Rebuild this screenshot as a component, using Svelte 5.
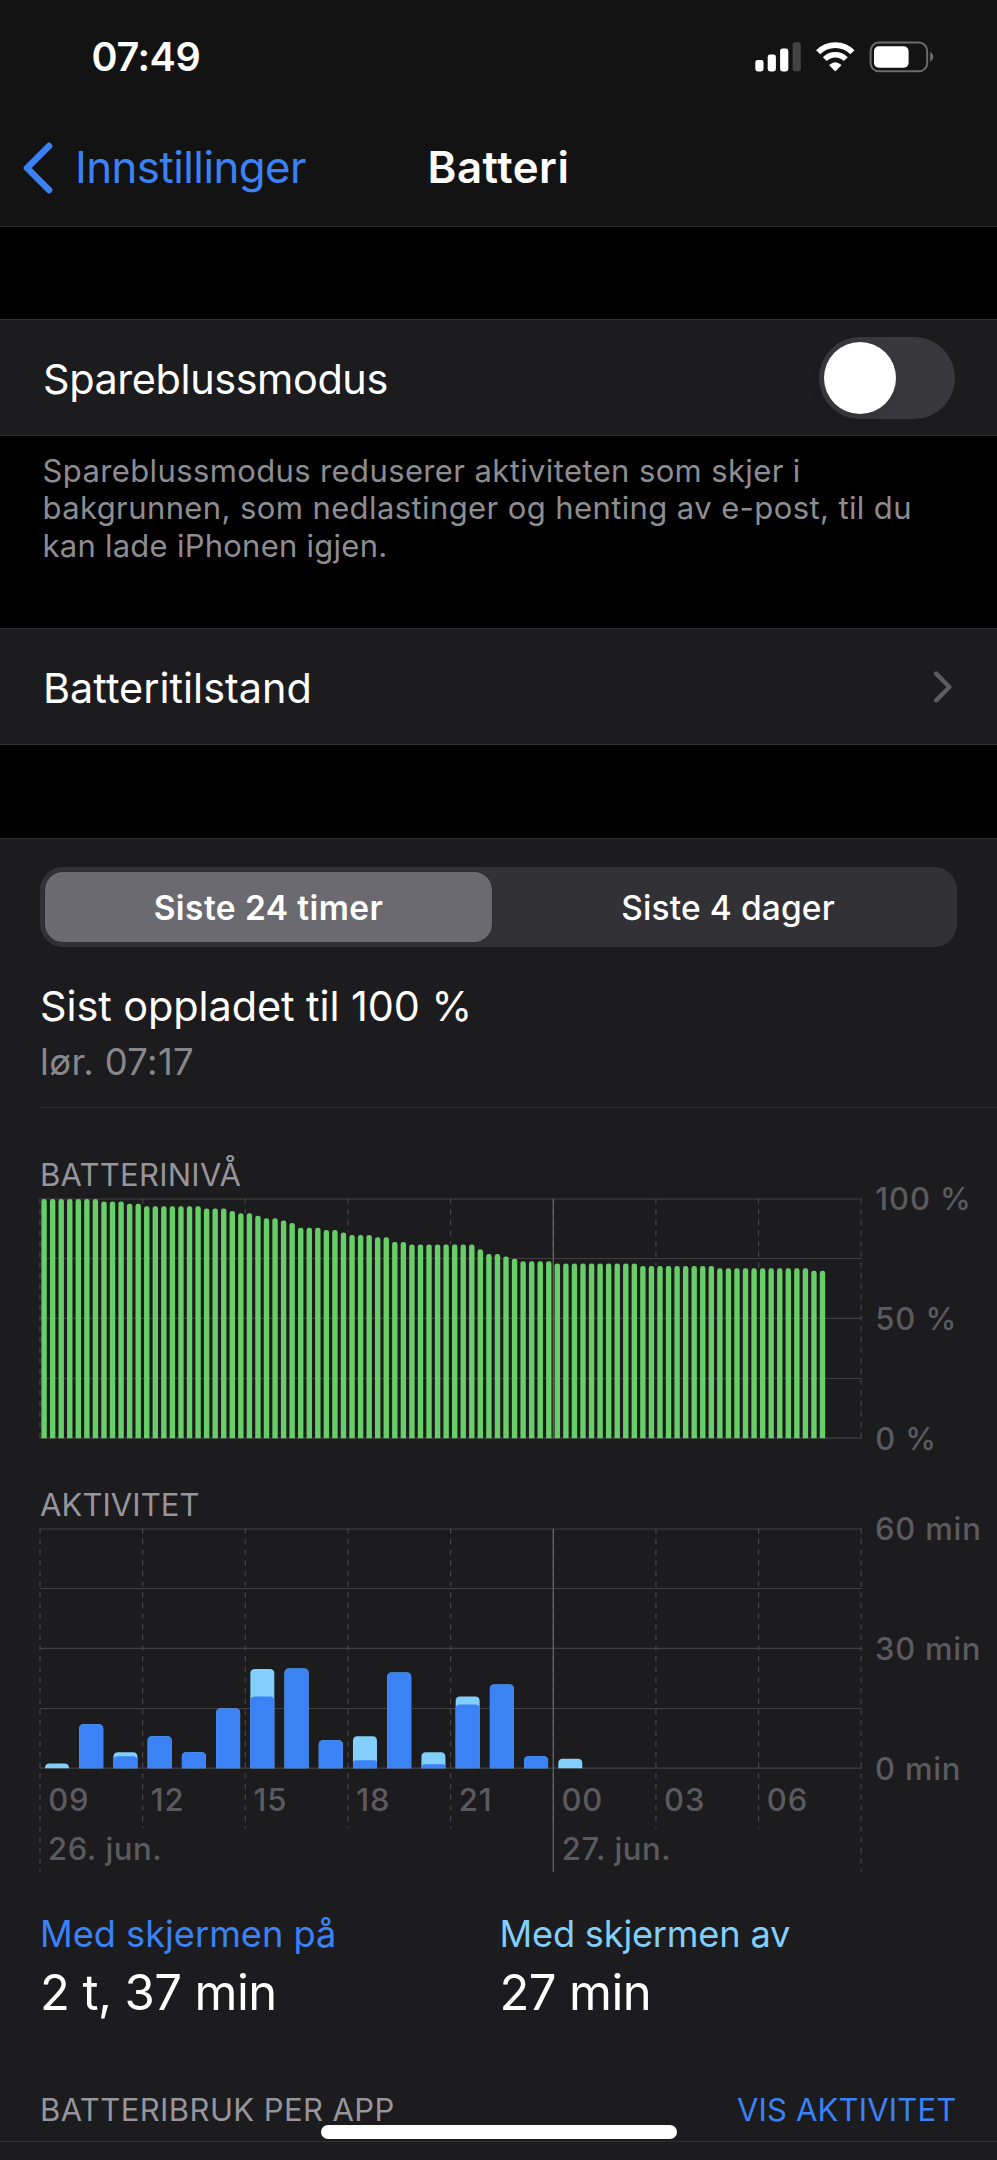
<script>
  // Battery level as [percent, number of consecutive quarter hours]
  const runs = [
    [100, 7], [99, 3], [98, 2], [97, 7], [96, 3], [95, 1], [94, 2], [93, 1],
    [92, 2], [91, 1], [90, 1], [88, 3], [87, 2], [86, 1], [85, 3], [84, 2],
    [82, 2], [81, 8], [79, 1], [77, 2], [76, 1], [75, 1], [74, 4], [73, 10],
    [72, 9], [71, 11], [70, 2]
  ];
  const levels = runs.flatMap(([v, n]) => Array(n).fill(v));

  // Minutes per hour: total, and the part with the screen on
  const activity = [
    [1.2, 0], [11, 11], [4, 3], [8, 8], [4, 4], [15, 15], [24.9, 18], [25, 25],
    [7, 7], [8, 2], [24, 24], [4, 1], [18, 16], [21, 21], [3, 3], [2.4, 0]
  ];

  const left = 40;
  const section = 102.65;
  const right = left + section * 8;
  const top = 4;
  const base = 243.2;
  const span = base - top;
  const lines = [4, 63.5, 123.3, 183.5, 243.1];
  const verticals = Array.from({ length: 9 }, (_, i) => left + i * section);
  const hours = ['09', '12', '15', '18', '21', '00', '03', '06'];

  const levelTop = (v) => base - (span * v) / 100;
  const dashEnd = (i) => (i === 0 || i === 8 ? base : levelTop(levels[i * 12 - 1]));
  const barPath = (x, w, h, r) => {
    const k = Math.min(r, h);
    const y = base - h;
    return `M${x} ${base}V${y + k}q0 ${-k} ${r} ${-k}h${w - 2 * r}q${r} 0 ${r} ${k}V${base}Z`;
  };
  const minutes = (m) => (m * span) / 60;

  let saver = false;
</script>

<div class="screen">
  <header>
    <div class="status">
      <span class="time">07:49</span>
      <svg class="indicators" width="180" height="32" viewBox="754 40.5 180 32">
        <g fill="#fff">
          <rect x="755.3" y="59.5" width="8.2" height="11.5" rx="2.4" />
          <rect x="767.7" y="54" width="8.2" height="17" rx="2.4" />
          <rect x="780.1" y="48" width="8.2" height="23" rx="2.4" />
          <rect x="792.6" y="41.8" width="8.2" height="29.2" rx="2.4" fill="#434344" />
        </g>
        <g fill="none" stroke="#fff">
          <path d="M818.2 51.7A24 24 0 0 1 852.4 51.7" stroke-width="5.8" />
          <path d="M824.8 58.7A14.6 14.6 0 0 1 845.8 58.7" stroke-width="5.5" />
        </g>
        <path d="M835.3 70.2L829.9 64.7Q835.3 60 840.7 64.7Z" fill="#fff" stroke="#fff" stroke-width="1.2" stroke-linejoin="round" />
        <rect x="870.6" y="42" width="56.6" height="28.8" rx="8.4" fill="none" stroke="#6c6c6c" stroke-width="1.9" />
        <rect x="874" y="45.8" width="34.6" height="21.4" rx="4.8" fill="#fff" />
        <path d="M930.2 51.6Q933.2 53 933.2 56.3T930.2 61Z" fill="#6c6c6c" />
      </svg>
    </div>
    <nav>
      <a href="#top" class="back">
        <svg width="30" height="52" viewBox="0 0 30 52">
          <path d="M26 4L4 26L26 48" fill="none" stroke="#3b82f7" stroke-width="6.6" stroke-linecap="round" stroke-linejoin="round" />
        </svg>
        <span>Innstillinger</span>
      </a>
      <h1>Batteri</h1>
    </nav>
  </header>

  <section class="group first">
    <div class="row">
      <span class="saver">Spareblussmodus</span>
      <button class="toggle" class:on={saver} aria-label="Spareblussmodus" on:click={() => (saver = !saver)}>
        <i></i>
      </button>
    </div>
  </section>
  <p class="note">
    <span>Spareblussmodus reduserer aktiviteten som skjer i</span>
    <span class="middle">bakgrunnen, som nedlastinger og henting av e-post, til du</span>
    <span class="last">kan lade iPhonen igjen.</span>
  </p>

  <section class="group">
    <div class="row">
      <span class="health">Batteritilstand</span>
      <svg class="chevron" width="20" height="32" viewBox="0 0 20 32">
        <path d="M3.2 2.6L16.4 16L3.2 29.4" fill="none" stroke="#5b5b60" stroke-width="4.4" stroke-linecap="round" stroke-linejoin="round" />
      </svg>
    </div>
  </section>

  <main>
    <div class="segments">
      <button class="active">Siste 24 timer</button>
      <button>Siste 4 dager</button>
    </div>

    <div class="charged">
      <div class="charged-title">Sist oppladet til 100 %</div>
      <div class="charged-time">lør. 07:17</div>
    </div>

    <section class="chart level">
      <h2>BATTERINIVÅ</h2>
      <svg width="997" height="244" viewBox="0 0 997 244">
        <g class="grid">
          {#each lines as y}<line x1="40" x2={right + 0.5} y1={y} y2={y} />{/each}
        </g>
        <g class="dashes">
          {#each verticals as x, i}
            <line x1={x} x2={x} y1={top - 0.7} y2={dashEnd(i)} />
          {/each}
        </g>
        <line class="midnight" x1={verticals[5]} x2={verticals[5]} y1={top} y2={base} />
        <g fill="#68ce67">
          {#each levels as v, i}
            <path d={barPath(41.4 + i * 8.554, 5.4, (span * v) / 100, 2.4)} />
          {/each}
        </g>
        <g class="labels">
          <text x="875.3" y="15" letter-spacing="0.9">100 %</text>
          <text x="875.3" y="135" letter-spacing="0.9">50 %</text>
          <text x="875.3" y="254.5" letter-spacing="0.9">0 %</text>
        </g>
      </svg>
    </section>

    <section class="chart">
      <h2 class="act">AKTIVITET</h2>
      <svg width="997" height="355" viewBox="0 0 997 355">
        <g class="grid">
          {#each lines as y}<line x1="40" x2={right + 0.5} y1={y} y2={y} />{/each}
        </g>
        <g class="dashes">
          {#each verticals as x, i}
            <line x1={x} x2={x} y1={top - 0.7} y2={i === 0 || i === 8 ? 346.7 : 303.3} />
          {/each}
        </g>
        <line class="midnight" x1={verticals[5]} x2={verticals[5]} y1={top} y2="346.7" />
        {#each activity as [total, on], i}
          <path d={barPath(45 + i * 34.22, 24, minutes(total), 4.5)} fill="#82cffb" />
          {#if on}
            <path d={barPath(45 + i * 34.22, 24, minutes(on), on < 3 ? 3 : 4.5)} fill="#3b82f7" />
          {/if}
        {/each}
        <g class="labels">
          <text x="875" y="15" letter-spacing="0.8">60 min</text>
          <text x="875" y="135" letter-spacing="0.75">30 min</text>
          <text x="875" y="254.5" letter-spacing="0.8">0 min</text>
          {#each hours as h, i}
            <text x={verticals[i] + 8.2} y="286" letter-spacing="0.9">{h}</text>
          {/each}
          <text x={verticals[0] + 8} y="335" letter-spacing="0.6">26. jun.</text>
          <text x={verticals[5] + 8.5} y="335" letter-spacing="0.6">27. jun.</text>
        </g>
      </svg>
    </section>

    <div class="stats">
      <div>
        <div class="stat-label on">Med skjermen på</div>
        <div class="stat-value">2 t, 37 min</div>
      </div>
      <div>
        <div class="stat-label off">Med skjermen av</div>
        <div class="stat-value">27 min</div>
      </div>
    </div>

    <div class="usage">
      <span class="usage-title">BATTERIBRUK PER APP</span>
      <a href="#activity">VIS AKTIVITET</a>
    </div>
  </main>

  <div class="home"></div>
</div>

<style>
  :global(body) {
    background: #000;
  }
  .screen {
    position: relative;
    width: 997px;
    height: 2160px;
    overflow: hidden;
    display: flex;
    flex-direction: column;
    background: #000;
    color: #fff;
    font-family: Inter, "Liberation Sans", sans-serif;
    white-space: nowrap;
  }
  .screen > * {
    flex-shrink: 0;
  }
  header {
    box-sizing: border-box;
    height: 227px;
    background: #131313;
    border-bottom: 1px solid #272728;
  }
  .status {
    height: 113px;
    display: flex;
    align-items: center;
    justify-content: space-between;
    padding: 0 63px 0 91.5px;
  }
  .time {
    font-size: 39.5px;
    font-weight: 600;
    letter-spacing: -0.4px;
  }
  nav {
    height: 109px;
    display: grid;
    grid-template-columns: 1fr auto 1fr;
    align-items: center;
    font-size: 43.8px;
  }
  .back {
    display: flex;
    align-items: center;
    gap: 22px;
    padding-left: 23px;
    color: #3b82f7;
    text-decoration: none;
    letter-spacing: -0.55px;
  }
  h1 {
    margin: 0;
    font-size: inherit;
    font-weight: 600;
    letter-spacing: 0.5px;
  }
  .group.first {
    margin-top: 92px;
  }
  .row {
    box-sizing: border-box;
    height: 117px;
    display: flex;
    align-items: center;
    justify-content: space-between;
    padding: 1px 42.5px 0 43px;
    background: #1c1c1e;
    border-top: 1px solid #303033;
    border-bottom: 1px solid #303033;
    font-size: 41.4px;
  }
  .saver {
    letter-spacing: -0.4px;
    padding-top: 2px;
  }
  .health {
    letter-spacing: 0.02px;
    padding-top: 1px;
  }
  .toggle {
    width: 135.5px;
    height: 82px;
    box-sizing: border-box;
    padding: 5px;
    border: 0;
    border-radius: 41px;
    background: #39393d;
    display: flex;
  }
  .toggle.on {
    justify-content: flex-end;
    background: #68ce67;
  }
  .toggle i {
    width: 72px;
    height: 72px;
    border-radius: 50%;
    background: #fff;
    box-shadow: 0 6px 16px rgba(0, 0, 0, 0.08);
  }
  .chevron {
    margin-right: 2px;
  }
  .note {
    box-sizing: border-box;
    height: 192px;
    margin: 0;
    padding: 16px 0 0 42.5px;
    display: flex;
    flex-direction: column;
    font-size: 31px;
    line-height: 37.3px;
    letter-spacing: 0.38px;
    color: #8d8d92;
  }
  .note .middle {
    letter-spacing: 0.4px;
  }
  .note .last {
    letter-spacing: 0.25px;
  }
  main {
    margin-top: 93px;
    height: 1322px;
    box-sizing: border-box;
    border-top: 1px solid #303033;
    background: #1c1c1e;
  }
  .segments {
    box-sizing: border-box;
    width: 917px;
    height: 80px;
    margin: 28px 0 0 40px;
    padding: 5px;
    display: grid;
    grid-template-columns: 447px 1fr;
    border-radius: 23px;
    background: #323136;
  }
  .segments button {
    border: 0;
    padding: 1px 0 0 12px;
    border-radius: 18px;
    background: transparent;
    color: #fff;
    font: 500 33.5px Inter, "Liberation Sans", sans-serif;
    letter-spacing: 0.13px;
  }
  .segments button.active {
    padding-left: 0;
    background: #6b6a70;
    font-weight: 600;
    letter-spacing: 0.43px;
    box-shadow: 0 0 0 0.7px rgba(0, 0, 0, 0.12);
  }
  .charged {
    box-sizing: border-box;
    height: 161px;
    margin-left: 40px;
    padding-top: 33px;
    border-bottom: 1.5px solid #2c2c2e;
  }
  .charged-title {
    font-size: 41.4px;
    line-height: 52px;
    letter-spacing: -0.07px;
  }
  .charged-time {
    margin-top: 7px;
    font-size: 36.4px;
    line-height: 46px;
    letter-spacing: 0.38px;
    color: #88888c;
  }
  .chart {
    padding-top: 46.7px;
  }
  .chart.level {
    box-sizing: border-box;
    height: 330px;
  }
  .chart svg {
    display: block;
    overflow: visible;
  }
  h2 {
    box-sizing: border-box;
    height: 40.3px;
    margin: 0 0 0 40px;
    font-size: 31px;
    font-weight: 400;
    line-height: 40.3px;
    letter-spacing: 0.25px;
    color: #96959c;
  }
  h2.act {
    letter-spacing: 0.08px;
  }
  .grid line {
    stroke: #404043;
    stroke-width: 1.2;
  }
  .dashes line {
    stroke: #454548;
    stroke-width: 1.2;
    stroke-dasharray: 5.3 5.35;
  }
  .midnight {
    stroke: #67676a;
    stroke-width: 1.2;
  }
  .labels {
    fill: #5b5b5f;
    font-size: 31px;
    font-weight: 500;
  }
  .stats {
    display: grid;
    grid-template-columns: 459.5px 1fr;
    padding: 31px 0 0 40px;
  }
  .stat-label {
    font-size: 36.2px;
    line-height: 46px;
    letter-spacing: 0;
  }
  .stat-label.on {
    color: #3b82f7;
  }
  .stat-label.off {
    color: #82cffb;
    letter-spacing: -0.2px;
  }
  .stat-value {
    margin-top: 6px;
    font-size: 49px;
    line-height: 60px;
    letter-spacing: -0.6px;
  }
  .usage {
    box-sizing: border-box;
    height: 52px;
    margin-top: 67px;
    padding: 0 40.5px 0 40px;
    display: flex;
    justify-content: space-between;
    font-size: 31px;
    line-height: 40px;
    border-bottom: 1.5px solid #303033;
  }
  .usage-title {
    letter-spacing: 0.41px;
    color: #96959c;
  }
  .usage a {
    color: #3b82f7;
    text-decoration: none;
    letter-spacing: 0.18px;
  }
  .home {
    position: absolute;
    left: 321px;
    top: 2125.3px;
    width: 356px;
    height: 13.4px;
    border-radius: 7px;
    background: #fff;
  }
</style>
